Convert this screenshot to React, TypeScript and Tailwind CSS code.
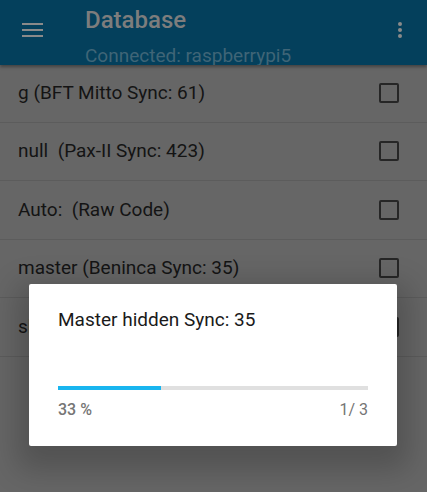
const rows = [
  'g (BFT Mitto Sync: 61)',
  'null  (Pax-II Sync: 423)',
  'Auto:  (Raw Code)',
  'master (Beninca Sync: 35)',
  'slave (Beninca Sync: 35)',
];

export default function App() {
  return (
    <div className="relative h-[492px] w-[427px] overflow-hidden bg-[#666666] font-['Roboto',sans-serif]">
      {/* App bar */}
      <header className="relative z-10 flex h-[65px] items-start bg-[#04405c] shadow-[0_2px_3px_rgba(0,0,0,0.35)]">
        <div className="flex h-[65px] w-[85px] items-center pl-[22px] pb-[6px]">
          <div className="flex w-[21px] flex-col gap-[4px]">
            <span className="h-[2px] bg-[#8a8a8a]" />
            <span className="h-[2px] bg-[#8a8a8a]" />
            <span className="h-[2px] bg-[#8a8a8a]" />
          </div>
        </div>
        <div className="flex h-[65px] flex-1 flex-col overflow-hidden pt-[4px]">
          <h1 className="text-[24px] font-medium leading-[32px] text-[#7d7d7d]">Database</h1>
          <p className="text-[19px] leading-[40px] text-[#3f6577]">Connected: raspberrypi5</p>
        </div>
        <div className="flex h-[65px] w-[54px] flex-col items-center justify-center gap-[2px] pb-[6px]">
          <span className="h-[4px] w-[4px] rounded-full bg-[#8a8a8a]" />
          <span className="h-[4px] w-[4px] rounded-full bg-[#8a8a8a]" />
          <span className="h-[4px] w-[4px] rounded-full bg-[#8a8a8a]" />
        </div>
      </header>

      {/* List */}
      <ul className="-mt-[1px]">
        {rows.map((r) => (
          <li
            key={r}
            className="flex h-[58.5px] items-center justify-between border-b border-[#5c5c5c] pl-[18px] pr-[28px]"
          >
            <span className="whitespace-pre text-[19px] text-[#141414]">{r}</span>
            <span className="h-[20px] w-[20px] rounded-[2px] border-2 border-[#262626]" />
          </li>
        ))}
      </ul>

      {/* Progress dialog */}
      <div className="absolute left-[29px] top-[284px] z-20 h-[162px] w-[368px] rounded-[2px] bg-white px-[29px] shadow-[0_12px_30px_12px_rgba(0,0,0,0.2)]">
        <p className="pt-[24px] text-[19px] leading-[24px] text-[#1a1a1a]">Master hidden Sync: 35</p>
        <div className="mt-[54px] h-[4px] w-full bg-[#e0e0e0]">
          <div className="h-full bg-[#19b5ef]" style={{ width: `${(1 / 3) * 100}%` }} />
        </div>
        <div className="mt-[8px] flex justify-between text-[16px] leading-[24px] text-[#757575]">
          <span className="font-medium">33 %</span>
          <span>1/ 3</span>
        </div>
      </div>
    </div>
  );
}
